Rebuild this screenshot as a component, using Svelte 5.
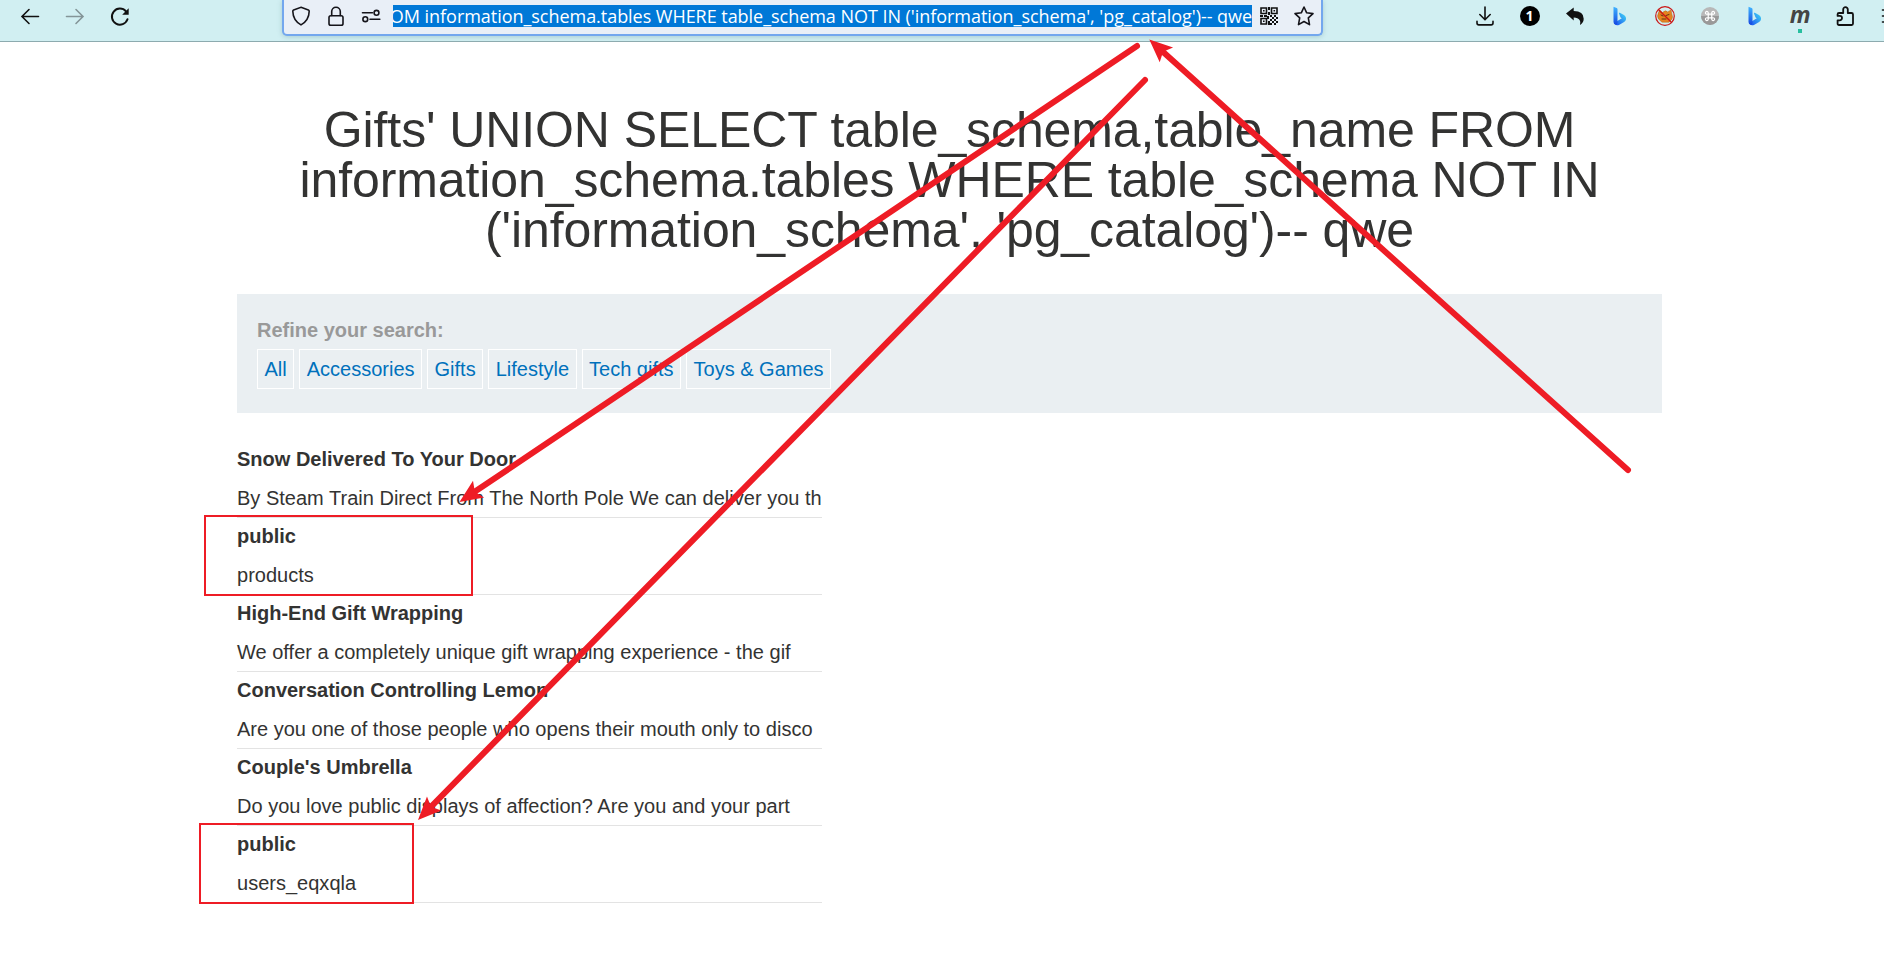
<script>
  const query = "OM information_schema.tables WHERE table_schema NOT IN ('information_schema', 'pg_catalog')-- qwe";
  const filters = ['All', 'Accessories', 'Gifts', 'Lifestyle', 'Tech gifts', 'Toys & Games'];
  const rows = [
    ['Snow Delivered To Your Door', 'By Steam Train Direct From The North Pole We can deliver you th'],
    ['public', 'products'],
    ['High-End Gift Wrapping', 'We offer a completely unique gift wrapping experience - the gif'],
    ['Conversation Controlling Lemon', 'Are you one of those people who opens their mouth only to disco'],
    ["Couple's Umbrella", 'Do you love public displays of affection? Are you and your part'],
    ['public', 'users_eqxqla']
  ];
  const arrows = [
    { from: [1137, 46], to: [459.5, 502] },
    { from: [1145, 80], to: [418, 820] },
    { from: [1628, 470], to: [1149.3, 39.5] }
  ].map(({ from, to }) => {
    const dx = from[0] - to[0], dy = from[1] - to[1];
    const len = Math.hypot(dx, dy);
    return { from, to, len, angle: (Math.atan2(dy, dx) * 180) / Math.PI };
  });
</script>

{#snippet bing()}
  <svg class="icon" viewBox="0 0 20 20" stroke="none">
    <defs>
      <linearGradient id="b1" x1="0" y1="0" x2="0" y2="1"><stop offset="0" stop-color="#3fb4ff" /><stop offset="1" stop-color="#1648e0" /></linearGradient>
      <linearGradient id="b2" x1="0" y1="1" x2="1" y2="0"><stop offset="0" stop-color="#1a4ff0" /><stop offset="1" stop-color="#44dcf5" /></linearGradient>
    </defs>
    <path d="M7 15.200 11.800 12.300 10.600 11.500 9 7.600q-.4-1.200.8-.8l3.700 1.900q3.200 2 2.400 5-.4 1.500-1.800 2.400L9 18.900q-2.500.8-4-.4z" fill="url(#b2)" stroke="none" />
    <path d="M3.500 1.200q0-.6.6-.3L6.700 2q.8.400.8 1.300v13.500q-.2 2-1.700 2-2.300-.3-2.300-2.800z" fill="url(#b1)" stroke="none" />
  </svg>
{/snippet}

<header class="toolbar">
  <nav class="nav">
    <svg class="icon" viewBox="0 0 20 20"><path d="M18.500 10.500H2M9 3.500 2 10.500l7 7" /></svg>
    <svg class="icon dim" viewBox="0 0 20 20"><path d="M1.500 10.500H18M11 3.500l7 7-7 7" /></svg>
    <svg class="icon" viewBox="0 0 20 20"><path d="M17.500 13.200A8 8 0 1 1 16 5.400" stroke-width="2" /><path d="M18.700 2.200v6.500h-6.500z" fill="#111" stroke="none" /></svg>
  </nav>
  <div class="urlbar">
    <svg class="icon" viewBox="0 0 20 20"><path d="M10 1.300 17.400 4q.8.300.8 1.200Q18 14.300 10 18.900 2 14.300 1.800 5.200 1.800 4.300 2.600 4z" /></svg>
    <svg class="icon" viewBox="0 0 20 20"><rect x="3" y="9.700" width="14" height="9.500" rx="1.800" /><path d="M5.700 9.500V5.500a4.300 4.300 0 0 1 8.600 0v4" /></svg>
    <svg class="icon" viewBox="0 0 20 20"><path d="M1.500 6.800h10M9 13.200h9.800" /><circle cx="15.500" cy="6.800" r="2.400" /><circle cx="4.300" cy="13.200" r="2.400" /></svg>
    <div class="query"><span>{query}</span></div>
    <svg class="icon qr" viewBox="0 0 20 20">
      <path d="M2 2h5.500v5.500H2zM12.500 2H18v5.500h-5.500zM2 12.500h5.500V18H2z" fill="none" stroke="#111" stroke-width="1.600" />
      <path d="M4 4h1.600v1.600H4zM14.500 4h1.600v1.600h-1.600zM4 14.500h1.600v1.600H4zM9 1h2v3H9zM9 6h2v3H9zM1 9h3v2H1zM5 9h3v2H5zM8 10h2v3H8zM11 9h2v2h-2zM15 9h2v2h-2zM17 11h2v2h-2zM13 11h2v2h-2zM11 13h2v2h-2zM15 13h2v2h-2zM9 15h2v4H9zM13 15h2v2h-2zM17 15h2v2h-2zM11 17h2v2h-2zM15 17h2v2h-2z" fill="#111" stroke="none" />
    </svg>
    <svg class="icon" viewBox="0 0 20 20"><path stroke-linejoin="round" d="m10 1 2.700 5.800 6.300.8-4.700 4.300 1.200 6.700-5.500-3.100-5.500 3.100 1.200-6.700L1 7.600l6.300-.8z" /></svg>
  </div>
  <div class="extensions">
    <svg class="icon" viewBox="0 0 20 20"><path d="M10 1v12.500M4.800 8.500l5.200 5.200 5.200-5.200M2 15.300v1.700q0 1.900 1.900 1.900h12.200q1.900 0 1.900-1.900v-1.700" /></svg>
    <div class="badge">1</div>
    <svg class="icon" viewBox="0 0 20 20"><path d="M1 7.500 8.700 1.500v3.600q10 .2 10 7.600 0 4-3.700 6.300 1-3-.4-5.100-1.600-2.300-5.900-2.400v3z" fill="#111" stroke="none" /></svg>
    {@render bing()}
    <svg class="icon" viewBox="0 0 20 20"><path d="m3.500 7 1-3 3 2.500q3-3 5-.6L16 4l.8 4q1.200 2.500.2 5l-3 3.200H7L3.500 13q-2-3 0-6z" fill="#e58420" stroke="#b5661b" stroke-width=".5" /><path d="m6 9 2 1m3-.5 3-1M7 13h4" stroke="#633410" stroke-width="1" /><circle cx="10" cy="10" r="9.300" stroke="#cb1717" stroke-width="1.200" /><path d="m3.700 3.700 12.600 12.600" stroke="#cb1717" stroke-width="1.400" /></svg>
    <svg class="icon" viewBox="0 0 20 20"><circle cx="10" cy="10" r="9" fill="#b8b8b8" stroke="none" /><path d="M1 10a9 9 0 0 0 18 0z" fill="#999" stroke="none" /><path transform="translate(10 10) scale(.88) translate(-10 -10)" d="M8 8h4v4H8zM8 8H6.500A1.600 1.600 0 1 1 8 6.500zM12 8V6.500A1.600 1.600 0 1 1 13.500 8zM12 12h1.500a1.600 1.600 0 1 1-1.500 1.500zM8 12v1.500A1.600 1.600 0 1 1 6.500 12z" stroke="#fff" stroke-width="1.400" /></svg>
    {@render bing()}
    <div class="letter">m</div>
    <svg class="icon" viewBox="0 0 20 20"><path stroke-linejoin="round" stroke-width="1.800" d="M4 19q-1.400 0-1.400-1.400v-3.300h2.200a2.200 2.200 0 0 0 0-4.400H2.600V8.300Q2.600 7 4 7h4.200V3.500a2.300 2.300 0 0 1 4.600 0V7h3.700Q18 7 18 8.400v9.200Q18 19 16.600 19z" /></svg>
    <svg class="icon" viewBox="0 0 20 20"><path d="M2.500 4h16M2.500 10h16M2.500 16h16" /></svg>
  </div>
</header>

<main>
  <h1>Gifts' UNION SELECT table_schema,table_name FROM information_schema.tables WHERE table_schema NOT IN ('information_schema', 'pg_catalog')-- qwe</h1>
  <section class="filters">
    <div class="label">Refine your search:</div>
    <div class="links">
      {#each filters as f}<a href="#top">{f}</a>{/each}
    </div>
  </section>
  <div class="results">
    {#each rows as [name, text]}
      <div class="row"><strong>{name}</strong><span>{text}</span></div>
    {/each}
  </div>
</main>

<svg class="marks" viewBox="0 0 1884 954">
  <rect x="205" y="516" width="267" height="79" />
  <rect x="200" y="824" width="213" height="79" />
  {#each arrows as a}
    <g transform="translate({a.to[0]} {a.to[1]}) rotate({a.angle})">
      <line x1="16" y1="0" x2={a.len} y2="0" />
      <path d="M0 0 23 -10 18.500 0 23 10z" />
    </g>
  {/each}
</svg>

<style>
  :global(body) { background: #fff; overflow: hidden; }
  :global(#app) { position: relative; height: 954px; }
  .toolbar {
    box-sizing: border-box; height: 42px; display: flex; align-items: flex-start;
    background: #d1eff2; border-bottom: 1px solid #8dabaf; overflow: hidden;
  }
  .icon { width: 20px; height: 20px; flex: none; display: block; fill: none; stroke: #111; stroke-width: 1.6; stroke-linecap: round; overflow: visible; }
  .dim { stroke: #849598; }
  .nav { display: flex; gap: 25px; padding: 6px 0 0 20px; width: 262px; flex: none; }
  .urlbar {
    box-sizing: border-box; width: 1041px; height: 36px; flex: none; display: flex; align-items: flex-start;
    gap: 15px; padding: 6px 7px 0; background: #e9eff7; border: 2px solid #73a7ee; border-top: 0;
    border-radius: 0 0 5px 5px; box-shadow: 0 1px 5px #6f9ba066;
  }
  .urlbar .icon { stroke: #15141a; }
  .query {
    width: 859px; height: 22px; margin: -1px -8px 0 -3px; flex: none; display: flex; justify-content: flex-end;
    overflow: hidden; background: #0078d7; color: #fff; font: 18px/22px "Open Sans", "Noto Sans", sans-serif;
    letter-spacing: -0.04px; white-space: pre;
  }
  .query span { flex: none; }
  .extensions { display: flex; gap: 25.1px; padding: 6px 0 0 151.5px; flex: none; }
  .badge { width: 20px; height: 20px; border-radius: 50%; background: #000; color: #fff; font: bold 14px/20px "Open Sans", sans-serif; text-align: center; }
  .letter { position: relative; width: 20px; height: 20px; color: #444; font: italic bold 23px/17px "Open Sans", sans-serif; display: flex; justify-content: center; }
  .letter::after { content: ''; position: absolute; left: 8px; top: 23px; width: 4px; height: 4px; background: #26bf9f; }
  main { width: 1425px; margin-left: 237px; color: #333332; font: 20px/23px "Liberation Sans", Arial, sans-serif; }
  h1 { margin: 0; padding: 63px 55px 39px; font-size: 50px; line-height: 50px; font-weight: 400; letter-spacing: -0.1px; text-align: center; }
  .filters { box-sizing: border-box; height: 119px; padding: 25px 20px; background: #eaeff2; }
  .label { height: 30px; font-weight: 700; color: #999; }
  .links { display: flex; gap: 5px; }
  .links a { box-sizing: border-box; height: 40px; padding: 8px 6.5px; border: 1px solid #fff; color: #0071bc; text-decoration: none; white-space: nowrap; }
  .results { width: 585px; padding-top: 28px; }
  .row { box-sizing: border-box; height: 77px; display: flex; flex-direction: column; gap: 16px; padding-top: 7px; border-bottom: 1px solid #e3e3e3; white-space: nowrap; }
  .row span { letter-spacing: 0.012px; }
  .marks { position: absolute; inset: 0; width: 1884px; height: 954px; pointer-events: none; }
  .marks rect { fill: none; stroke: #ee1c25; stroke-width: 2; }
  .marks line { stroke: #ee1c25; stroke-width: 6; stroke-linecap: round; }
  .marks path { fill: #ee1c25; }
</style>
